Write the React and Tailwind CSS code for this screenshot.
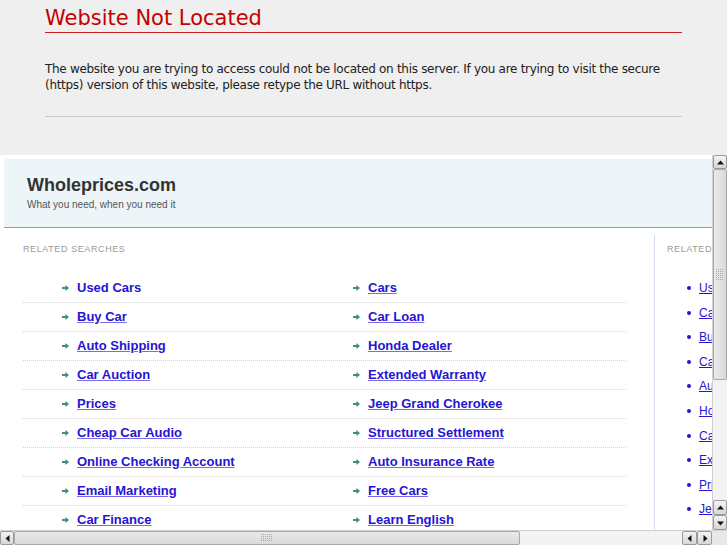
import React from "react";

const LEFT = [
  ["Used Cars", "Cars"],
  ["Buy Car", "Car Loan"],
  ["Auto Shipping", "Honda Dealer"],
  ["Car Auction", "Extended Warranty"],
  ["Prices", "Jeep Grand Cherokee"],
  ["Cheap Car Audio", "Structured Settlement"],
  ["Online Checking Account", "Auto Insurance Rate"],
  ["Email Marketing", "Free Cars"],
  ["Car Finance", "Learn English"],
];

const RIGHT = [
  "Used Cars",
  "Cars",
  "Buy Car",
  "Car Loan",
  "Auto Shipping",
  "Honda Dealer",
  "Car Auction",
  "Extended Warranty",
  "Prices",
  "Jeep Grand Cherokee",
];

function Arrow() {
  return (
    <svg width="7" height="6" viewBox="0 0 7 6" className="shrink-0">
      <path d="M0 2.1h3.4V0L7 3 3.4 6V3.9H0z" fill="#3b8f80" />
    </svg>
  );
}

function Tri({ dir }) {
  const d = {
    up: "M1 5.5L4.5 1.5 8 5.5z",
    down: "M1 2.5L4.5 6.5 8 2.5z",
    left: "M5.5 1L1.5 4.5 5.5 8z",
    right: "M2.5 1L6.5 4.5 2.5 8z",
  }[dir];
  const horiz = dir === "left" || dir === "right";
  return (
    <svg width={horiz ? 7 : 9} height={horiz ? 9 : 7} viewBox={horiz ? "0 0 7 9" : "0 0 9 7"}>
      <path d={d} fill="#111" />
    </svg>
  );
}

function Btn({ dir, className = "" }) {
  return (
    <div
      className={
        "flex items-center justify-center rounded-[2px] border border-[#9a9a9a] bg-gradient-to-b from-[#f4f4f4] to-[#d6d6d6] " +
        className
      }
    >
      <Tri dir={dir} />
    </div>
  );
}

function Grip({ vertical }) {
  const dots = [];
  const cols = vertical ? 4 : 6;
  const rows = vertical ? 6 : 4;
  for (let r = 0; r < rows; r++)
    for (let c = 0; c < cols; c++)
      dots.push(<rect key={r + "-" + c} x={c * 2} y={r * 2} width="1" height="1" fill="#a9a9a9" />);
  return (
    <svg width={cols * 2} height={rows * 2}>
      {dots}
    </svg>
  );
}

export default function App() {
  return (
    <div className="w-[727px] h-[545px] overflow-hidden bg-[#efefef] flex flex-col">
      {/* top notice */}
      <div className="h-[155px] shrink-0 px-[45px] pt-[6px] font-['DejaVu_Sans',sans-serif]">
        <div className="w-[637px] border-b border-[#cc1f1f] pb-[1px]">
          <h1 className="text-[21px] leading-[25px] text-[#c40000]">Website Not Located</h1>
        </div>
        <div className="w-[637px] mt-[28px] pb-[23px] border-b border-[#cbcbcb]">
          <p className="text-[12px] leading-[16px] text-[#222] tracking-[-0.3px]">
            The website you are trying to access could not be located on this server. If you are trying to visit the secure (https) version of this website, please retype the URL without https.
          </p>
        </div>
      </div>

      {/* framed page */}
      <div className="flex-1 flex flex-col bg-white min-h-0">
        <div className="flex-1 flex min-h-0">
          <div className="w-[712px] overflow-hidden font-['Liberation_Sans',Arial,sans-serif]">
            <div className="w-[940px] pl-[4px] pt-[4px]">
              <div className="h-[69px] bg-[#eef5f8] border-b border-[#7f9bd8] pl-[23px] pt-[15px]">
                <div className="text-[18px] font-bold leading-[22px] text-[#333]">Wholeprices.com</div>
                <div className="text-[10px] leading-[12px] mt-[3px] text-[#555]">What you need, when you need it</div>
              </div>
              <div className="flex mt-[7px]">
                <div className="w-[651px] shrink-0 border-r border-[#d3dcf0] pl-[19px] pr-[28px] pt-[9px] h-[300px]">
                  <div className="text-[9px] leading-[10px] tracking-[0.6px] text-[#9a9a9a]">RELATED SEARCHES</div>
                  <div className="mt-[20px]">
                    {LEFT.map((pair, i) => (
                      <div key={i} className="h-[29px] flex items-center pl-[39px] border-b border-dotted border-[#c6d8ef]">
                        {pair.map((t, j) => (
                          <div key={j} className="w-[291px] shrink-0 flex items-center gap-[8px]">
                            <Arrow />
                            <a
                              className={
                                "text-[13px] font-bold leading-[16px] text-[#2614d4] " +
                                (i === 0 && j === 0 ? "" : "underline decoration-[#7a6ee6]")
                              }
                            >
                              {t}
                            </a>
                          </div>
                        ))}
                      </div>
                    ))}
                  </div>
                </div>
                <div className="flex-1 pl-[12px] pt-[9px]">
                  <div className="text-[9px] leading-[10px] tracking-[0.6px] text-[#9a9a9a]">RELATED SEARCHES</div>
                  <ul className="mt-[22px] pl-[20px]">
                    {RIGHT.map((t, i) => (
                      <li key={i} className="h-[24.55px] flex items-center gap-[8px]">
                        <span className="w-[4px] h-[4px] rounded-full bg-[#2614d4] shrink-0" />
                        <a className="text-[12px] leading-[14px] text-[#2614d4] underline">{t}</a>
                      </li>
                    ))}
                  </ul>
                </div>
              </div>
            </div>
          </div>
          {/* vertical scrollbar */}
          <div className="w-[15px] shrink-0 flex flex-col bg-[#ececec] border-l border-[#d0d0d0]">
            <Btn dir="up" className="h-[14px] shrink-0" />
            <div className="h-[211px] shrink-0 rounded-[2px] border border-[#a8a8a8] bg-gradient-to-r from-[#eaeaea] to-[#d9d9d9] flex items-center justify-center">
              <Grip vertical />
            </div>
            <div className="flex-1 bg-[#f3f3f3]" />
            <Btn dir="up" className="h-[15px] shrink-0" />
            <Btn dir="down" className="h-[15px] shrink-0" />
          </div>
        </div>
        {/* horizontal scrollbar */}
        <div className="h-[15px] shrink-0 flex bg-[#ececec] border-t border-[#d0d0d0]">
          <Btn dir="left" className="w-[14px] shrink-0" />
          <div className="w-[506px] shrink-0 rounded-[2px] border border-[#a8a8a8] bg-gradient-to-b from-[#eaeaea] to-[#d9d9d9] flex items-center justify-center">
            <Grip />
          </div>
          <div className="flex-1 bg-[#f3f3f3]" />
          <Btn dir="left" className="w-[15px] shrink-0" />
          <Btn dir="right" className="w-[15px] shrink-0" />
          <div className="w-[15px] shrink-0 bg-[#e8e8e8]" />
        </div>
      </div>
    </div>
  );
}
